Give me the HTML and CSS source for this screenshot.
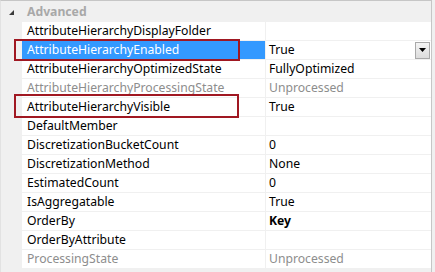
FILE: index.html
```html
<!DOCTYPE html>
<html lang="en">

<head>
    <meta charset="UTF-8">
    <title>Properties</title>
    <link rel="stylesheet" href="styles.css">
</head>

<body>
    <div class="grid">
        <div class="cat">
            <svg class="cat-toggle" width="5" height="5" viewBox="0 0 5 5">
                <polygon points="5,0 5,5 0,5" fill="#3c3c3c" />
            </svg>
            <span class="cat-name">Advanced</span>
        </div>

        <div class="row">
            <div class="name">AttributeHierarchyDisplayFolder</div>
            <div class="value"></div>
        </div>
        <div class="row selected">
            <div class="name">AttributeHierarchyEnabled</div>
            <div class="value">True
                <span class="drop">
                    <svg width="7" height="4" viewBox="0 0 7 4">
                        <polygon points="0,0 7,0 3.5,4" fill="#000" />
                    </svg>
                </span>
            </div>
        </div>
        <div class="row">
            <div class="name">AttributeHierarchyOptimizedState</div>
            <div class="value">FullyOptimized</div>
        </div>
        <div class="row readonly">
            <div class="name">AttributeHierarchyProcessingState</div>
            <div class="value">Unprocessed</div>
        </div>
        <div class="row">
            <div class="name">AttributeHierarchyVisible</div>
            <div class="value">True</div>
        </div>
        <div class="row">
            <div class="name">DefaultMember</div>
            <div class="value"></div>
        </div>
        <div class="row">
            <div class="name">DiscretizationBucketCount</div>
            <div class="value">0</div>
        </div>
        <div class="row">
            <div class="name">DiscretizationMethod</div>
            <div class="value">None</div>
        </div>
        <div class="row">
            <div class="name">EstimatedCount</div>
            <div class="value">0</div>
        </div>
        <div class="row">
            <div class="name">IsAggregatable</div>
            <div class="value">True</div>
        </div>
        <div class="row">
            <div class="name">OrderBy</div>
            <div class="value bold">Key</div>
        </div>
        <div class="row">
            <div class="name">OrderByAttribute</div>
            <div class="value"></div>
        </div>
        <div class="row readonly">
            <div class="name">ProcessingState</div>
            <div class="value">Unprocessed</div>
        </div>

        <!-- red marks drawn over the grid -->
        <div class="mark mark-enabled"></div>
        <div class="mark mark-visible"></div>
    </div>
</body>

</html>
```

FILE: styles.css
```css
:root {
    --gutter: #f0f0f0;
    --line: #f0f0f0;
    --border: #c6c6c6;
    --select: #3399ff;
    --grey: #8d8d8d;
    --mark: #a01822;
}

body {
    margin: 0;
    background-color: var(--gutter);
    font-family: "Noto Sans", "Open Sans", sans-serif;
    font-size: 12.2px;
    color: #000000;
}

.grid {
    position: relative;
    width: 430px;
    height: 271px;
    border-top: 1px solid var(--border);
    border-left: 1px solid #e2e2e2;
    border-right: 1px solid var(--border);
    background-color: var(--gutter);
}

.cat {
    display: flex;
    align-items: center;
    height: 21px;
}

.cat-toggle {
    margin: 1px 0 0 8px;
}

.cat-name {
    margin-left: 13px;
    font-weight: bold;
    color: #a8a8a8;
}

.row {
    display: flex;
    height: 19px;
    padding-left: 21px;
}

.name,
.value {
    box-sizing: border-box;
    height: 19px;
    line-height: 18px;
    border-bottom: 1px solid var(--line);
    background-color: #ffffff;
    white-space: nowrap;
    overflow: hidden;
}

.name {
    width: 243px;
    padding-left: 5px;
}

.value {
    flex: 1;
    display: flex;
    align-items: center;
    border-left: 1px solid var(--line);
    padding-left: 3px;
}

.selected .name {
    background-color: var(--select);
    color: #ffffff;
}

.readonly .name,
.readonly .value {
    color: var(--grey);
}

.bold {
    font-weight: bold;
}

.drop {
    display: flex;
    align-items: center;
    justify-content: center;
    box-sizing: border-box;
    width: 15px;
    height: 17px;
    margin-left: auto;
    margin-right: 1px;
    border: 1px solid #a9a9a9;
    background: linear-gradient(#f4f4f4, #dcdcdc);
}

.mark {
    position: absolute;
    left: 13px;
    border: 2px solid var(--mark);
}

.mark-enabled {
    top: 38px;
    width: 222px;
    height: 18px;
}

.mark-visible {
    top: 93px;
    width: 221px;
    height: 20px;
}
```
